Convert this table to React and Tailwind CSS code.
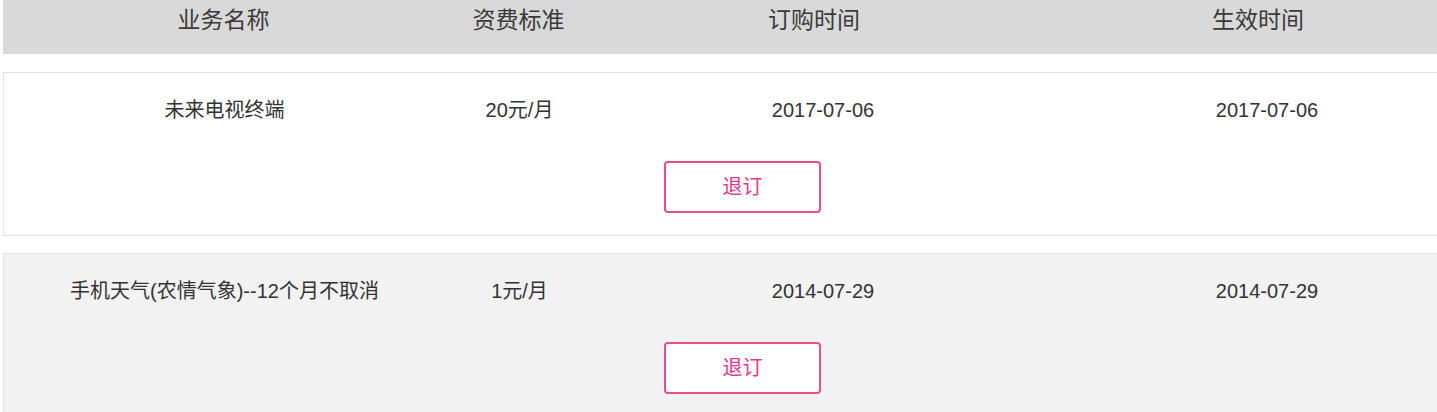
import React from "react";

const font = { fontFamily: '"Liberation Sans", "Noto Sans CJK SC", sans-serif' };

const rows = [
  { name: "未来电视终端", fee: "20元/月", order: "2017-07-06", eff: "2017-07-06", bg: "bg-white", mt: "mt-[18px]" },
  { name: "手机天气(农情气象)--12个月不取消", fee: "1元/月", order: "2014-07-29", eff: "2014-07-29", bg: "bg-[#f2f2f2]", mt: "mt-[17px]" },
];

const cols = "grid grid-cols-[441px_149px_442px_446px]";

export default function App() {
  return (
    <div className="w-[1437px] h-[412px] overflow-hidden bg-white text-[#333]" style={font}>
      <div className="pl-[3px] w-[1481px]">
        <div className={`${cols} h-[54px] bg-[#d9d9d9] pt-[6px] text-[23px] leading-[28px] text-[#3a3a3a]`}>
          <div className="text-center">业务名称</div>
          <div className="text-center">资费标准</div>
          <div className="text-center">订购时间</div>
          <div className="text-center">生效时间</div>
        </div>
        {rows.map((r, i) => (
          <div
            key={i}
            className={`${r.mt} border border-r-0 border-[#e2e2e2] ${r.bg} pt-[23px] pb-[22px]`}
          >
            <div className={`${cols} text-[20px] leading-[28px]`}>
              <div className="text-center">{r.name}</div>
              <div className="text-center">{r.fee}</div>
              <div className="text-center pl-4">{r.order}</div>
              <div className="text-center pl-4">{r.eff}</div>
            </div>
            <div className="flex justify-center mt-[37px]">
              <button className="w-[157px] h-[52px] border-2 border-[#ec4c8e] rounded-[4px] bg-white text-[20px] text-[#e5358a] flex items-center justify-center">
                退订
              </button>
            </div>
          </div>
        ))}
      </div>
    </div>
  );
}
